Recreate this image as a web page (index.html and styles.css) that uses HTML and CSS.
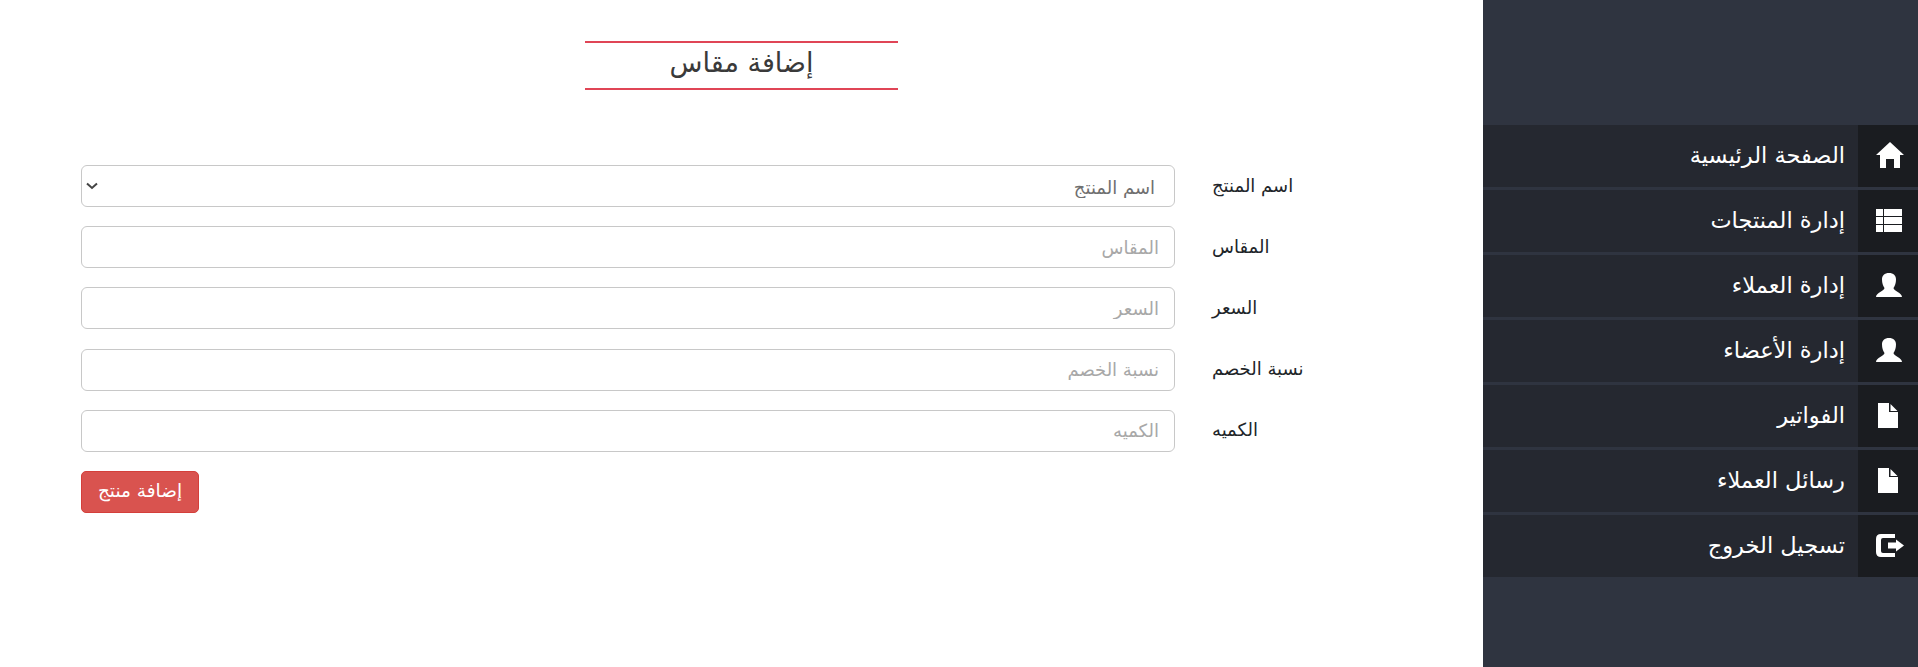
FILE: index.html
```html
<!DOCTYPE html>
<html lang="ar" dir="rtl">

<head>
    <meta charset="UTF-8">
    <meta name="viewport" content="width=device-width, initial-scale=1.0">
    <title>إضافة مقاس</title>
    <link rel="stylesheet" href="styles.css">
</head>

<body>

    <aside class="sidebar">
        <ul class="menu">
            <li class="menu-item">
                <span class="menu-icon">
                    <svg width="28" height="26" viewBox="0 0 28 26"><path d="M14 0 L28 13 H24 V26 H18 V17 H10 V26 H4 V13 H0 Z" fill="#fff"/></svg>
                </span>
                <a class="menu-link" href="#">الصفحة الرئيسية</a>
            </li>
            <li class="menu-item">
                <span class="menu-icon">
                    <svg width="26" height="23" viewBox="0 0 26 23"><path d="M0 0 H7 V7 H0 Z M8 0 H26 V7 H8 Z M0 8 H7 V15 H0 Z M8 8 H26 V15 H8 Z M0 16 H7 V23 H0 Z M8 16 H26 V23 H8 Z" fill="#fff"/></svg>
                </span>
                <a class="menu-link" href="#">إدارة المنتجات</a>
            </li>
            <li class="menu-item">
                <span class="menu-icon">
                    <svg width="26" height="24" viewBox="0 0 26 24"><path d="M13 0 C17.500 0 20 2.500 20 6.500 C20 10 19 13 17.500 15 C17.500 17.500 26 20 26 24 H0 C0 20 8.500 17.500 8.500 15 C7 13 6 10 6 6.500 C6 2.500 8.500 0 13 0 Z" fill="#fff"/></svg>
                </span>
                <a class="menu-link" href="#">إدارة العملاء</a>
            </li>
            <li class="menu-item">
                <span class="menu-icon">
                    <svg width="26" height="24" viewBox="0 0 26 24"><path d="M13 0 C17.500 0 20 2.500 20 6.500 C20 10 19 13 17.500 15 C17.500 17.500 26 20 26 24 H0 C0 20 8.500 17.500 8.500 15 C7 13 6 10 6 6.500 C6 2.500 8.500 0 13 0 Z" fill="#fff"/></svg>
                </span>
                <a class="menu-link" href="#">إدارة الأعضاء</a>
            </li>
            <li class="menu-item">
                <span class="menu-icon">
                    <svg class="icon-file" width="20" height="25" viewBox="0 0 20 25"><path d="M0 0 H11 V9 H20 V25 H0 Z M12.500 1 L19.500 8 H12.500 Z" fill="#fff"/></svg>
                </span>
                <a class="menu-link" href="#">الفواتير</a>
            </li>
            <li class="menu-item">
                <span class="menu-icon">
                    <svg class="icon-file" width="20" height="25" viewBox="0 0 20 25"><path d="M0 0 H11 V9 H20 V25 H0 Z M12.500 1 L19.500 8 H12.500 Z" fill="#fff"/></svg>
                </span>
                <a class="menu-link" href="#">رسائل العملاء</a>
            </li>
            <li class="menu-item">
                <span class="menu-icon">
                    <svg width="28" height="23" viewBox="0 0 28 23"><path d="M5 0 H19 V4 H7 Q5 4 5 6 V17 Q5 19 7 19 H19 V23 H5 Q0 23 0 18 V5 Q0 0 5 0 Z M20 5.500 L28 11.500 L20 17.500 V14.500 H12 V8.500 H20 Z" fill="#fff"/></svg>
                </span>
                <a class="menu-link" href="#">تسجيل الخروج</a>
            </li>
        </ul>
    </aside>

    <main class="content">
        <h2 class="page-title">إضافة مقاس</h2>

        <form class="product-form">
            <div class="form-row">
                <label class="form-label">اسم المنتج</label>
                <div class="select-wrap">
                    <select class="form-control form-select">
                        <option>اسم المنتج</option>
                    </select>
                    <svg class="select-arrow" width="12" height="8" viewBox="0 0 12 8"><path d="M1 1.500 L6 6 L11 1.500" fill="none" stroke="#444" stroke-width="2"/></svg>
                </div>
            </div>
            <div class="form-row">
                <label class="form-label">المقاس</label>
                <input class="form-control" type="text" placeholder="المقاس">
            </div>
            <div class="form-row">
                <label class="form-label">السعر</label>
                <input class="form-control" type="text" placeholder="السعر">
            </div>
            <div class="form-row">
                <label class="form-label">نسبة الخصم</label>
                <input class="form-control" type="text" placeholder="نسبة الخصم">
            </div>
            <div class="form-row">
                <label class="form-label">الكميه</label>
                <input class="form-control" type="text" placeholder="الكميه">
            </div>
            <div class="form-actions">
                <button class="btn-submit" type="button">إضافة منتج</button>
            </div>
        </form>
    </main>

</body>

</html>
```

FILE: styles.css
```css
html,
body {
    margin: 0;
    padding: 0;
    height: 100%;
    overflow: hidden;
}

body {
    display: flex;
    font-family: "DejaVu Sans", "Noto Sans", sans-serif;
    background-color: #fff;
    color: #212529;
}

.sidebar {
    width: 435px;
    height: 100%;
    flex-shrink: 0;
    padding-top: 125px;
    box-sizing: border-box;
    background-color: #2f3440;
}

.menu {
    margin: 0;
    padding: 0;
    list-style: none;
    display: flex;
    flex-direction: column;
    gap: 3px;
}

.menu-item {
    display: flex;
    height: 62px;
    background-color: #252830;
}

.menu-icon {
    width: 60px;
    padding: 0 0 2px 18px;
    box-sizing: border-box;
    display: flex;
    align-items: center;
    justify-content: flex-end;
    background-color: #1a1c20;
}

.icon-file {
    margin-left: 2px;
}

.menu-link {
    display: flex;
    align-items: center;
    padding: 0 13px 2px 0;
    color: #fff;
    font-size: 22.5px;
    text-decoration: none;
}

.content {
    flex: 1;
    padding-top: 41px;
}

.page-title {
    width: 313px;
    height: 45px;
    margin: 0 auto 75px;
    border-top: 2px solid #e04556;
    border-bottom: 2px solid #e04556;
    font-size: 27px;
    font-weight: 400;
    line-height: 40px;
    text-align: center;
    color: #3a3a3a;
}

.product-form {
    display: flex;
    flex-direction: column;
    gap: 19.2px;
    padding: 0 148px 0 81px;
}

.form-row {
    display: flex;
    align-items: center;
}

.form-label {
    width: 160px;
    flex-shrink: 0;
    padding: 0 0 2px 37px;
    box-sizing: border-box;
    font-size: 18px;
    text-align: left;
    color: #212529;
}

.form-control {
    flex: 1;
    width: 100%;
    height: 42px;
    padding: 0 15px;
    box-sizing: border-box;
    border: 1px solid #c8c8c8;
    border-radius: 6px;
    background-color: #fff;
    font-family: inherit;
    font-size: 18px;
    color: #6f6f6f;
}

.form-control::placeholder {
    color: #a8a8a8;
}

.select-wrap {
    flex: 1;
    position: relative;
    display: flex;
}

.form-select {
    appearance: none;
    padding: 3px 19px 0 0;
}

.select-arrow {
    position: absolute;
    left: 5px;
    top: 17px;
}

.form-actions {
    display: flex;
    justify-content: flex-end;
}

.btn-submit {
    width: 118px;
    height: 42px;
    padding: 0 0 3px;
    border: 1px solid #d43f3a;
    border-radius: 5px;
    background-color: #d9534f;
    font-family: inherit;
    font-size: 18.5px;
    color: #fff;
}
```
